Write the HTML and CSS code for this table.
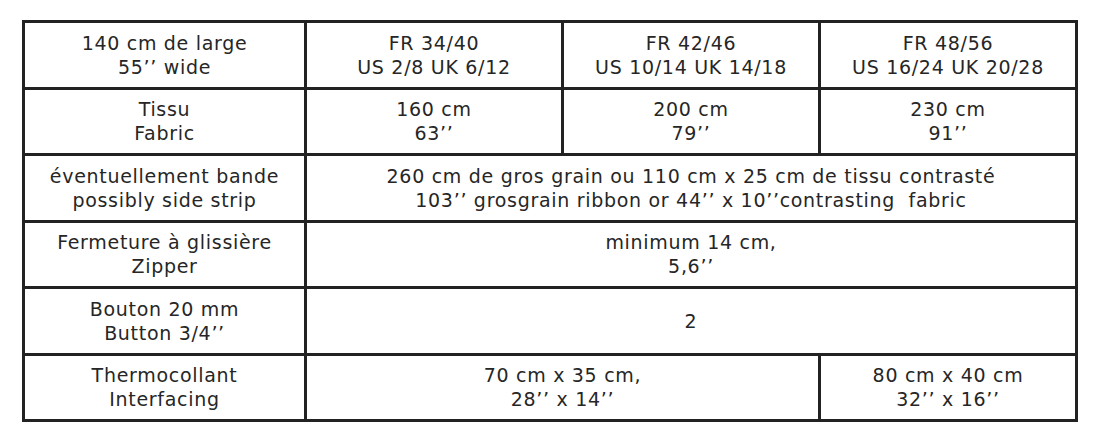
FILE: index.html
```html
<!DOCTYPE html>
<html>
<head>
<meta charset="utf-8">
<link rel="stylesheet" href="styles.css">
</head>
<body>
<table class="sizes">
  <colgroup>
    <col class="c-label">
    <col class="c-size">
    <col class="c-size">
    <col class="c-size">
  </colgroup>
  <tr>
    <td>140 cm de large<br>55’’ wide</td>
    <td>FR 34/40<br>US 2/8 UK 6/12</td>
    <td>FR 42/46<br>US 10/14 UK 14/18</td>
    <td>FR 48/56<br>US 16/24 UK 20/28</td>
  </tr>
  <tr>
    <td>Tissu<br>Fabric</td>
    <td>160 cm<br>63’’</td>
    <td>200 cm<br>79’’</td>
    <td>230 cm<br>91’’</td>
  </tr>
  <tr>
    <td>éventuellement bande<br>possibly side strip</td>
    <td colspan="3">260 cm de gros grain ou 110 cm x 25 cm de tissu contrasté<br>103’’ grosgrain ribbon or 44’’ x 10’’contrasting&nbsp; fabric</td>
  </tr>
  <tr>
    <td>Fermeture à glissière<br>Zipper</td>
    <td colspan="3">minimum 14 cm,<br>5,6’’</td>
  </tr>
  <tr>
    <td>Bouton 20 mm<br>Button 3/4’’</td>
    <td colspan="3">2</td>
  </tr>
  <tr>
    <td>Thermocollant<br>Interfacing</td>
    <td colspan="2">70 cm x 35 cm,<br>28’’ x 14’’</td>
    <td>80 cm x 40 cm<br>32’’ x 16’’</td>
  </tr>
</table>
</body>
</html>
```
FILE: styles.css
```css
html, body {
  margin: 0;
  background: #ffffff;
}
body {
  padding: 20px 0 0 22px;
  font-family: "DejaVu Sans", sans-serif;
  color: #262626;
}
.sizes {
  border-collapse: collapse;
  table-layout: fixed;
  width: 1052px;
  border: 3px solid #222222;
}
.c-label { width: 282px; }
.c-size { width: 257px; }
.sizes td {
  border: 3px solid #222222;
  height: 63.5px;
  padding: 0;
  text-align: center;
  vertical-align: middle;
  font-size: 19px;
  line-height: 24px;
  letter-spacing: 0.7px;
}
```
